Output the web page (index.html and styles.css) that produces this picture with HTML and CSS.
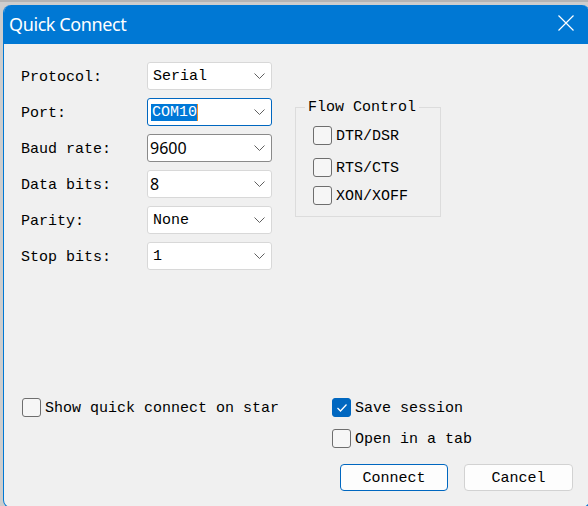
FILE: index.html
```html
<!DOCTYPE html>
<html>
<head>
<meta charset="utf-8">
<link rel="stylesheet" href="styles.css">
</head>
<body>
<div class="window">
  <div class="titlebar">
    <span class="title">Quick Connect</span>
    <svg class="close" width="16" height="16" viewBox="0 0 16 16"><path d="M0.5 0.5 L15.5 15.5 M15.5 0.5 L0.5 15.5" stroke="#fff" stroke-width="1.2" fill="none"/></svg>
  </div>
  <div class="content">
    <div class="top">
      <div class="form">
        <div class="row"><span class="lbl">Protocol:</span><div class="combo"><span class="val mono">Serial</span><svg class="chev" width="11" height="6" viewBox="0 0 11 6"><path d="M0.5 0.5 L5.5 5.5 L10.5 0.5" stroke="#606060" stroke-width="1" fill="none"/></svg></div></div>
        <div class="row"><span class="lbl">Port:</span><div class="combo focus"><span class="val sans"><span class="sel">COM10</span><span class="caret"></span></span><svg class="chev" width="11" height="6" viewBox="0 0 11 6"><path d="M0.5 0.5 L5.5 5.5 L10.5 0.5" stroke="#606060" stroke-width="1" fill="none"/></svg></div></div>
        <div class="row"><span class="lbl">Baud rate:</span><div class="combo hover"><span class="val sans">9600</span><svg class="chev" width="11" height="6" viewBox="0 0 11 6"><path d="M0.5 0.5 L5.5 5.5 L10.5 0.5" stroke="#606060" stroke-width="1" fill="none"/></svg></div></div>
        <div class="row"><span class="lbl">Data bits:</span><div class="combo"><span class="val sans">8</span><svg class="chev" width="11" height="6" viewBox="0 0 11 6"><path d="M0.5 0.5 L5.5 5.5 L10.5 0.5" stroke="#606060" stroke-width="1" fill="none"/></svg></div></div>
        <div class="row"><span class="lbl">Parity:</span><div class="combo"><span class="val mono">None</span><svg class="chev" width="11" height="6" viewBox="0 0 11 6"><path d="M0.5 0.5 L5.5 5.5 L10.5 0.5" stroke="#606060" stroke-width="1" fill="none"/></svg></div></div>
        <div class="row"><span class="lbl">Stop bits:</span><div class="combo"><span class="val mono">1</span><svg class="chev" width="11" height="6" viewBox="0 0 11 6"><path d="M0.5 0.5 L5.5 5.5 L10.5 0.5" stroke="#606060" stroke-width="1" fill="none"/></svg></div></div>
      </div>
      <fieldset class="group">
        <legend>Flow Control</legend>
        <div class="check g1"><span class="box"></span><span>DTR/DSR</span></div>
        <div class="check g2"><span class="box"></span><span>RTS/CTS</span></div>
        <div class="check g3"><span class="box"></span><span>XON/XOFF</span></div>
      </fieldset>
    </div>
    <div class="bottom">
      <div class="leftcol">
        <div class="check"><span class="box"></span><span>Show quick connect on star</span></div>
      </div>
      <div class="rightcol">
        <div class="check"><span class="box checked"><svg width="12" height="10" viewBox="0 0 12 10"><path d="M1.5 5 L4.5 8 L10.5 1.5" stroke="#fff" stroke-width="1.3" fill="none"/></svg></span><span>Save session</span></div>
        <div class="check tab"><span class="box"></span><span>Open in a tab</span></div>
        <div class="buttons">
          <button class="btn default">Connect</button>
          <button class="btn">Cancel</button>
        </div>
      </div>
    </div>
  </div>
</div>
</body>
</html>
```
FILE: styles.css
```css
html, body {
  margin: 0;
  padding: 0;
  width: 588px;
  height: 506px;
  overflow: hidden;
}
body {
  background: #cdcdcd;
  border-top: 2px solid #b4b4b4;
  box-sizing: border-box;
  padding-top: 3px;
  padding-left: 3px;
}
.window {
  width: 587px;
  height: 503px;
  background: #f0f0f0;
  border: 1px solid #0078d4;
  border-top: none;
  border-radius: 8px;
  box-sizing: border-box;
  overflow: hidden;
}
.titlebar {
  height: 39px;
  background: #0078d4;
  display: flex;
  align-items: center;
  padding-left: 6px;
  margin-left: -1px;
  margin-right: -1px;
}
.title {
  font-family: "Noto Sans", sans-serif;
  font-size: 18px;
  color: #fff;
  letter-spacing: -0.4px;
  flex: 1;
  margin-top: -2px;
}
.close {
  margin-right: 16px;
  margin-top: -4px;
}
.content {
  padding: 18px 0 0 17px;
  font-family: "Liberation Mono", monospace;
  font-size: 15px;
  color: #000;
}
.top {
  display: flex;
  align-items: flex-start;
}
.form {
  display: flex;
  flex-direction: column;
  gap: 8px;
}
.row {
  display: flex;
  align-items: center;
  height: 28px;
}
.lbl {
  width: 126px;
  padding-top: 2px;
}
.combo {
  width: 125px;
  height: 28px;
  box-sizing: border-box;
  background: #fff;
  border: 1px solid #d8d8d8;
  border-radius: 3px;
  display: flex;
  align-items: center;
  padding: 0 6px 0 3px;
}
.combo.focus {
  border-color: #0067c0;
}
.combo.hover {
  border-color: #8a8a8a;
}
.val {
  flex: 1;
  display: flex;
  align-items: center;
}
.val.mono {
  padding-left: 2px;
  padding-top: 1px;
}
.val.sans {
  font-family: "Noto Sans", sans-serif;
  font-size: 16px;
  margin-left: -1px;
}
.sel {
  background: #0078d7;
  color: #fff;
  height: 17px;
  line-height: 18px;
  padding: 0 0 0 1px;
  margin-left: 1px;
  font-family: "Liberation Mono", monospace;
  font-size: 15px;
}
.caret {
  width: 1px;
  height: 17px;
  background: #f08a24;
}
.group {
  margin: 35px 0 0 23px;
  padding: 0 0 0 17px;
  width: 146px;
  height: 120px;
  box-sizing: border-box;
  border: 1px solid #dcdcdc;
  min-width: 0;
}
.group legend {
  padding: 2px 3px 0;
  margin-left: -8px;
  height: 20px;
  line-height: 18px;
  box-sizing: border-box;
}
.check {
  display: flex;
  align-items: center;
  gap: 4px;
  height: 19px;
  line-height: 19px;
}
.check > span:last-child {
  padding-top: 1px;
}
.box {
  width: 19px;
  height: 19px;
  box-sizing: border-box;
  border: 1px solid #6e6e6e;
  border-radius: 3px;
  background: #f6f6f6;
  display: flex;
  align-items: center;
  justify-content: center;
}
.box.checked {
  background: #0067c0;
  border-color: #0067c0;
}
.g1 { margin-top: 9px; }
.g2 { margin-top: 13px; }
.g3 { margin-top: 9px; }
.bottom {
  display: grid;
  grid-template-columns: 311px auto;
  margin-top: 128px;
}
.leftcol {
  padding-left: 1px;
}
.tab {
  margin-top: 12px;
}
.buttons {
  display: flex;
  gap: 16px;
  margin-top: 16px;
  margin-left: 8px;
}
.btn {
  height: 27px;
  width: 108px;
  box-sizing: border-box;
  background: #fdfdfd;
  border: 1px solid #d2d2d2;
  border-radius: 4px;
  font-family: "Liberation Mono", monospace;
  font-size: 15px;
  color: #000;
  padding: 1px 0 0;
}
.btn.default {
  border-color: #0067c0;
}
.btn + .btn {
  width: 109px;
}
```
